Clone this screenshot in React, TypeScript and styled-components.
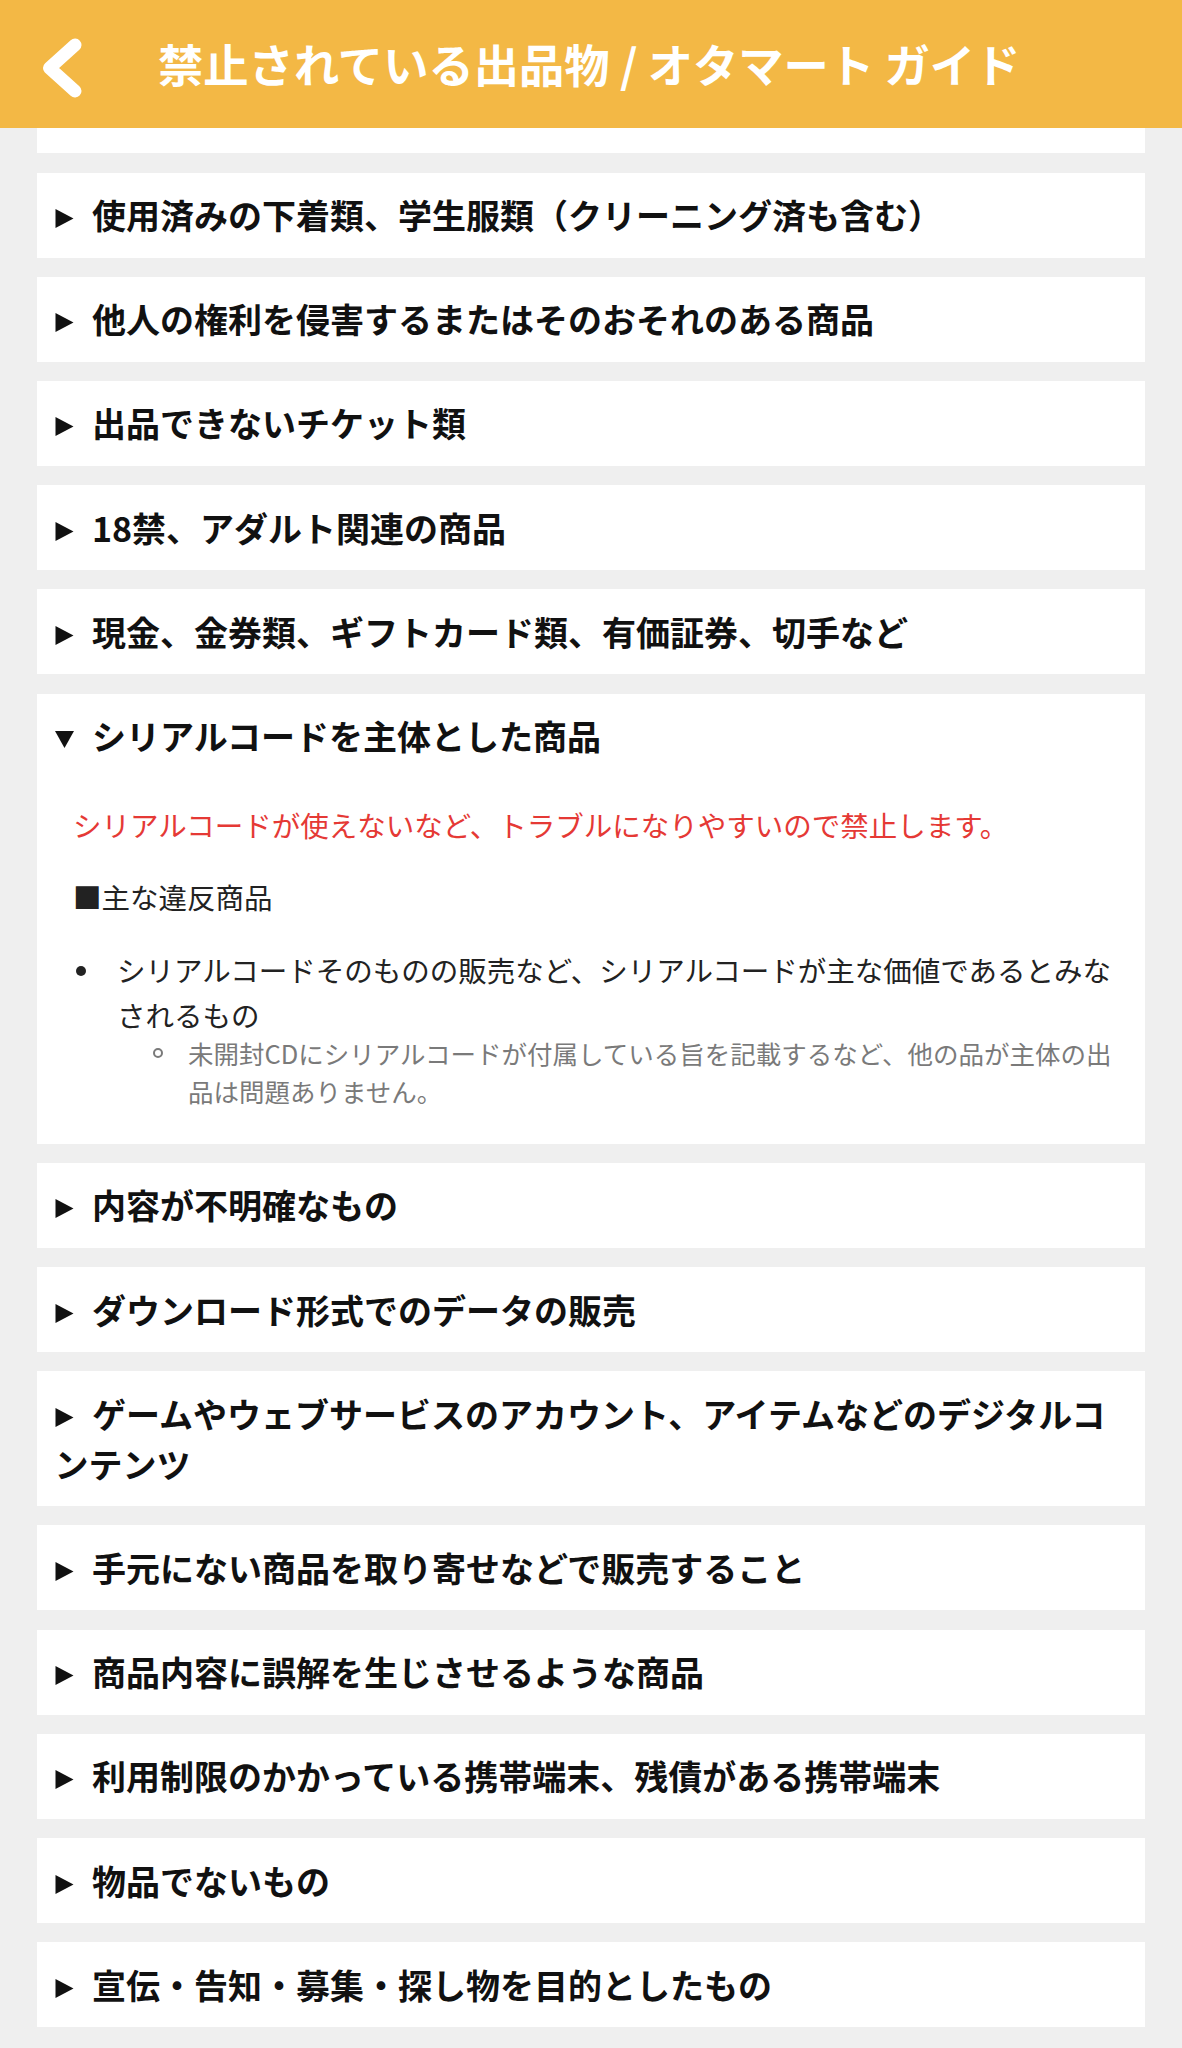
import React, { useLayoutEffect, useRef, useState } from "react";
import styled, { createGlobalStyle } from "styled-components";

type Rule = {
  title: string;
  lead?: string;
  heading?: string;
  points?: { text: string; notes?: string[] }[];
};

const rules: Rule[] = [
  {
    title: "法令に違反する商品、危険物",
    lead: "法令で販売が禁止・制限されているものは出品できません。",
    heading: "■主な違反商品",
    points: [{ text: "銃刀類、火薬類、薬物、医薬品、医療機器など" }],
  },
  { title: "使用済みの下着類、学生服類（クリーニング済も含む）" },
  { title: "他人の権利を侵害するまたはそのおそれのある商品" },
  { title: "出品できないチケット類" },
  { title: "18禁、アダルト関連の商品" },
  { title: "現金、金券類、ギフトカード類、有価証券、切手など" },
  {
    title: "シリアルコードを主体とした商品",
    lead: "シリアルコードが使えないなど、トラブルになりやすいので禁止します。",
    heading: "■主な違反商品",
    points: [
      {
        text: "シリアルコードそのものの販売など、シリアルコードが主な価値であるとみなされるもの",
        notes: [
          "未開封CDにシリアルコードが付属している旨を記載するなど、他の品が主体の出品は問題ありません。",
        ],
      },
    ],
  },
  { title: "内容が不明確なもの" },
  { title: "ダウンロード形式でのデータの販売" },
  { title: "ゲームやウェブサービスのアカウント、アイテムなどのデジタルコンテンツ" },
  { title: "手元にない商品を取り寄せなどで販売すること" },
  { title: "商品内容に誤解を生じさせるような商品" },
  { title: "利用制限のかかっている携帯端末、残債がある携帯端末" },
  { title: "物品でないもの" },
  { title: "宣伝・告知・募集・探し物を目的としたもの" },
];

// part of the first card still peeking out below the header
const PEEK = 25;

export default function App() {
  const [openSet, setOpenSet] = useState<Set<number>>(() => new Set([0, 6]));
  const viewportRef = useRef<HTMLDivElement>(null);
  const firstCardRef = useRef<HTMLElement>(null);

  useLayoutEffect(() => {
    const viewport = viewportRef.current;
    const first = firstCardRef.current;
    if (!viewport || !first) return;
    const top = viewport.getBoundingClientRect().top;
    const bottom = first.getBoundingClientRect().bottom;
    viewport.scrollTop = bottom - top - PEEK;
  }, []);

  const toggle = (i: number) =>
    setOpenSet((prev) => {
      const next = new Set(prev);
      if (next.has(i)) next.delete(i);
      else next.add(i);
      return next;
    });

  return (
    <Page>
      <GlobalStyle />
      <Header>
        <BackButton aria-label="戻る">
          <svg width="40" height="60" viewBox="0 0 40 60">
            <polyline
              points="33,7 7.5,30 33,53"
              fill="none"
              stroke="#fff"
              strokeWidth="13"
              strokeLinecap="round"
              strokeLinejoin="round"
            />
          </svg>
        </BackButton>
        <Title>禁止されている出品物 / オタマート ガイド</Title>
      </Header>

      <Viewport ref={viewportRef}>
        <List>
          {rules.map((rule, i) => {
            const open = openSet.has(i) && !!rule.lead;
            return (
              <Card
                key={rule.title}
                ref={i === 0 ? firstCardRef : undefined}
                $scrolledPast={i === 0}
              >
                <Summary onClick={() => toggle(i)}>
                  <Marker width="19" height="19" viewBox="0 0 19 19">
                    {open ? (
                      <polygon points="0,1 19,1 9.5,18" />
                    ) : (
                      <polygon points="0.5,0 18.5,9.5 0.5,19" />
                    )}
                  </Marker>
                  {rule.title}
                </Summary>
                {open && (
                  <Panel>
                    <Lead>{rule.lead}</Lead>
                    <Text>{rule.heading}</Text>
                    <Points>
                      {rule.points?.map((p) => (
                        <Point key={p.text}>
                          <Bullet>
                            <Dot />
                          </Bullet>
                          <div>
                            {p.text}
                            {p.notes && (
                              <Notes>
                                {p.notes.map((n) => (
                                  <Note key={n}>
                                    <NoteBullet>
                                      <Ring />
                                    </NoteBullet>
                                    <span>{n}</span>
                                  </Note>
                                ))}
                              </Notes>
                            )}
                          </div>
                        </Point>
                      ))}
                    </Points>
                  </Panel>
                )}
              </Card>
            );
          })}
        </List>
      </Viewport>
    </Page>
  );
}

const GlobalStyle = createGlobalStyle`
  html, body {
    margin: 0;
    padding: 0;
  }
  body {
    background: #efefef;
    font-family: "Noto Sans CJK JP", "Noto Sans", sans-serif;
    -webkit-font-smoothing: antialiased;
  }
`;

const Page = styled.div`
  height: 100vh;
  display: flex;
  flex-direction: column;
`;

const Header = styled.header`
  flex: 0 0 128px;
  display: flex;
  align-items: center;
  padding-left: 42px;
  background: #f3b845;
  position: relative;
  z-index: 1;
`;

const BackButton = styled.button`
  display: flex;
  padding: 0;
  margin: 0;
  border: 0;
  background: none;
  cursor: pointer;
  transform: translateY(4px);
`;

const Title = styled.h1`
  margin: 0 0 0 76px;
  color: #fff;
  font-size: 45.3px;
  font-weight: 700;
  line-height: 1;
  white-space: nowrap;
`;

const Viewport = styled.div`
  flex: 1;
  min-height: 0;
  overflow: hidden;
`;

const List = styled.div`
  display: flex;
  flex-direction: column;
  gap: 19.2px;
  padding: 20px 37px 60px;
`;

const Card = styled.section<{ $scrolledPast?: boolean }>`
  background: #fff;

  & > * {
    visibility: ${(p) => (p.$scrolledPast ? "hidden" : "visible")};
  }
`;

const Summary = styled.div`
  padding: 17.5px 17.5px;
  color: #111;
  font-size: 34px;
  font-weight: 700;
  line-height: 50px;
  cursor: pointer;
`;

const Marker = styled.svg`
  display: inline-block;
  margin-right: 18.5px;
  vertical-align: 1px;
  fill: #111;
`;

const Panel = styled.div`
  padding: 24px 16px 33px 36px;
  color: #222;
  font-size: 28.5px;
  line-height: 44.8px;
`;

const Text = styled.p`
  margin: 0 0 28px;
`;

const Lead = styled(Text)`
  color: #e53935;
`;

const Points = styled.ul`
  margin: 0;
  padding: 0;
  list-style: none;
`;

const Point = styled.li`
  display: flex;
`;

const Bullet = styled.span`
  flex: 0 0 44px;
  height: 44.8px;
  display: flex;
  align-items: center;
  padding-left: 3px;
  box-sizing: border-box;
`;

const Dot = styled.span`
  width: 10px;
  height: 10px;
  border-radius: 50%;
  background: #222;
`;

const Notes = styled.ul`
  margin: -4px 0 0;
  padding: 0;
  list-style: none;
  color: #7a7a7a;
  font-size: 25.5px;
  line-height: 38.5px;
`;

const Note = styled.li`
  display: flex;
`;

const NoteBullet = styled.span`
  flex: 0 0 71px;
  height: 38.5px;
  display: flex;
  align-items: center;
  padding-left: 36px;
  box-sizing: border-box;
`;

const Ring = styled.span`
  width: 10px;
  height: 10px;
  border-radius: 50%;
  border: 2px solid #7a7a7a;
  box-sizing: border-box;
`;
